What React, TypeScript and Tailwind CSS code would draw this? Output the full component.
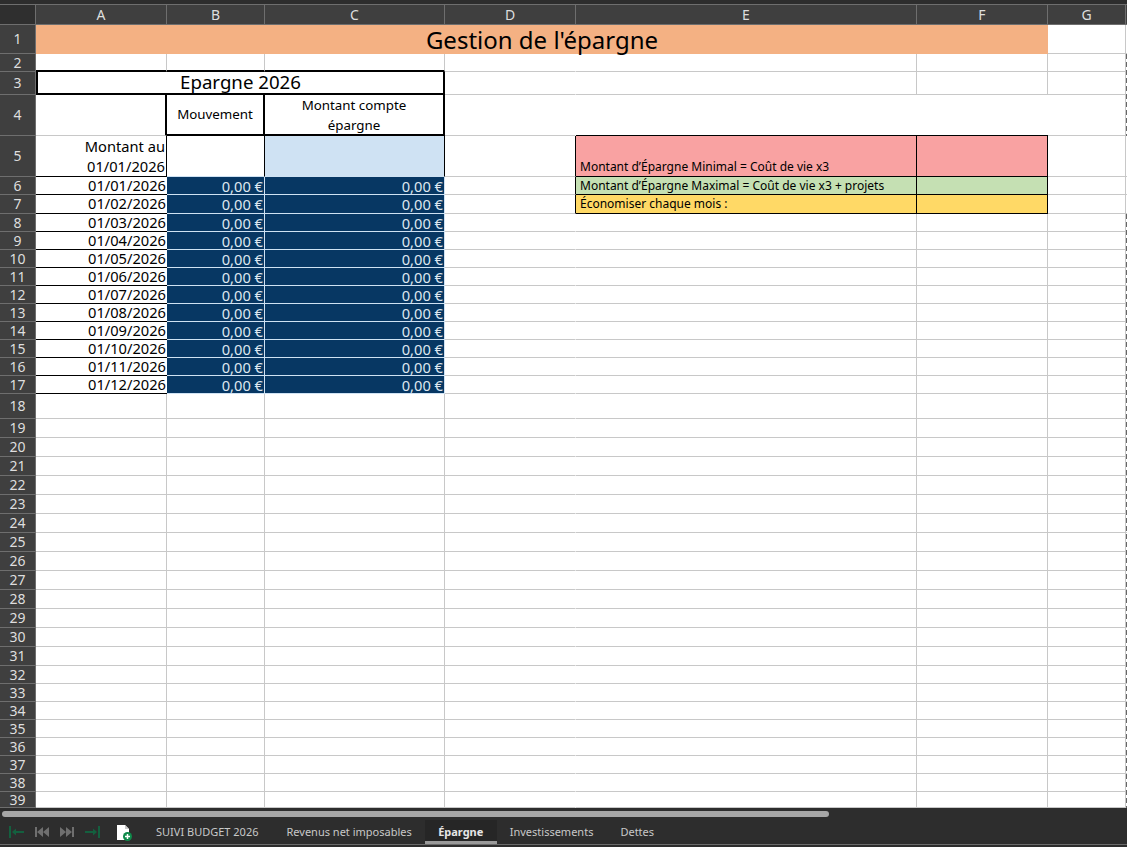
import React from 'react';

const colHeaders = ['A', 'B', 'C', 'D', 'E', 'F', 'G'];
const dates = ['01/01/2026', '01/02/2026', '01/03/2026', '01/04/2026', '01/05/2026', '01/06/2026', '01/07/2026', '01/08/2026', '01/09/2026', '01/10/2026', '01/11/2026', '01/12/2026'];
const blankRows = Array.from({ length: 22 }, (_, i) => i + 18);

const grid = 'border-r border-b border-[#c8c8c8]';

function Cell({ className = grid, children }: { className?: string; children?: React.ReactNode }) {
  return <div className={`min-w-0 overflow-hidden whitespace-nowrap ${className}`}>{children}</div>;
}

function RowHead({ n }: { n: number }) {
  return (
    <div className="flex items-center justify-center overflow-hidden border-r border-b border-[#6e6e6e] bg-[#3f3f3f] text-[14px] leading-none text-[#dedede]">
      {n}
    </div>
  );
}

function Sep() {
  return <span className="h-[14px] w-px bg-[#6a6a6a]" />;
}

function NavEnd({ flip }: { flip?: boolean }) {
  return (
    <svg width="16" height="12" viewBox="0 0 16 12" className={flip ? '-scale-x-100' : ''}>
      <path d="M1 0v12" stroke="#14603f" strokeWidth="2" />
      <path d="M15 6H5" stroke="#14603f" strokeWidth="2" />
      <path d="M3 6l4-3.5v7z" fill="#14603f" />
    </svg>
  );
}

function NavSkip({ flip }: { flip?: boolean }) {
  return (
    <svg width="14" height="10" viewBox="0 0 14 10" className={flip ? '-scale-x-100' : ''}>
      <path d="M0 0h2v10H0zM2 5l6-5v10zM8 5l6-5v10z" fill="#6f6f6f" />
    </svg>
  );
}

export default function App() {
  return (
    <div className="flex h-[847px] w-[1127px] flex-col overflow-hidden bg-[#2d2d2d] font-['Noto_Sans',sans-serif] text-black">
      <div className="h-1 shrink-0 bg-[#2d2d2d]" />
      <div className="relative grid h-[804px] shrink-0 grid-cols-[36px_131px_98px_180px_131px_341px_131px_78px_1fr] grid-rows-[21px_29px_18px_23px_41px_41px_18px_19px_repeat(10,18px)_25px_repeat(13,19px)_repeat(7,18px)_16px] overflow-hidden bg-white">
        {/* column headers */}
        <div className="border-t border-r border-b border-[#6e6e6e] bg-[#2f2f2f]" />
        {colHeaders.map((c) => (
          <div key={c} className="flex items-center justify-center border-t border-r border-b border-[#6e6e6e] bg-[#3f3f3f] text-[14px] leading-none text-[#dedede]">
            {c}
          </div>
        ))}
        <div className="border-t border-b border-[#6e6e6e] bg-[#3f3f3f]" />

        {/* row 1 */}
        <RowHead n={1} />
        <div className="col-span-6 flex items-center justify-center bg-[#f4b183] text-[24px] leading-none">Gestion de l'épargne</div>
        <Cell />
        <Cell className="border-b border-[#c8c8c8]" />

        {/* row 2 */}
        <RowHead n={2} />
        <Cell className="border-r border-b-2 border-r-[#c8c8c8] border-b-black" />
        <Cell className="border-r border-b-2 border-r-[#c8c8c8] border-b-black" />
        <Cell className="border-r border-b-2 border-r-[#c8c8c8] border-b-black" />
        <Cell className="border-b border-r border-b-[#c8c8c8] border-r-transparent" />
        <Cell />
        <Cell />
        <Cell />
        <Cell className="border-b border-[#c8c8c8]" />

        {/* row 3 */}
        <RowHead n={3} />
        <div className="col-span-3 flex items-center justify-center border-r-2 border-b-2 border-l-2 border-black text-[18.67px] leading-none">Epargne 2026</div>
        <Cell className="border-b border-r border-b-[#c8c8c8] border-r-transparent" />
        <Cell />
        <Cell />
        <Cell />
        <Cell className="border-b border-[#c8c8c8]" />

        {/* row 4 */}
        <RowHead n={4} />
        <Cell className="border-r-2 border-b border-r-black border-b-[#c8c8c8]" />
        <div className="flex items-center justify-center border-r-2 border-b-2 border-black text-[13.33px]">Mouvement</div>
        <div className="flex items-center justify-center border-r-2 border-b-2 border-black text-center text-[13.33px] leading-[20px]">
          Montant compte
          <br />
          épargne
        </div>
        <Cell className="border-b border-r border-b-[#c8c8c8] border-r-transparent" />
        <Cell className="border-b border-b-black" />
        <Cell className="border-b border-b-black" />
        <Cell />
        <Cell className="border-b border-[#c8c8c8]" />

        {/* row 5 */}
        <RowHead n={5} />
        <div className="border-r border-b border-black pr-px text-right text-[14.67px] leading-[20px]">
          Montant au
          <br />
          01/01/2026
        </div>
        <Cell className="border-r border-b border-r-black border-b-[#cfe2f3]" />
        <Cell className="border-r border-b border-r-black border-b-[#cfe2f3] bg-[#cfe2f3]" />
        <Cell className="border-r border-b border-r-black border-b-[#c8c8c8]" />
        <div className="flex items-end border-r border-b border-black bg-[#f9a2a2] pl-1 text-[12px] leading-[18px]">Montant d’Épargne Minimal = Coût de vie x3</div>
        <Cell className="border-r border-b border-black bg-[#f9a2a2]" />
        <Cell />
        <Cell className="border-b border-[#c8c8c8]" />

        {/* rows 6 to 17 */}
        {dates.map((d, i) => (
          <React.Fragment key={d}>
            <RowHead n={i + 6} />
            <div className="overflow-hidden border-b border-black pr-px text-right text-[14.67px] leading-[17px]">{d}</div>
            <div className="overflow-hidden border-r border-b border-[#cfe2f3] bg-[#073763] pt-px pr-px text-right text-[14.67px] leading-[17px] text-[#dfe8f0]">0,00 €</div>
            <div className="overflow-hidden border-r border-b border-[#cfe2f3] bg-[#073763] pt-px pr-px text-right text-[14.67px] leading-[17px] text-[#dfe8f0]">0,00 €</div>
            {i === 0 && <Cell className="border-r border-b border-r-black border-b-[#c8c8c8]" />}
            {i === 0 && <div className="overflow-hidden whitespace-nowrap border-r border-b border-black bg-[#c5e0b3] pl-1 text-[12px] leading-[17px]">Montant d’Épargne Maximal = Coût de vie x3 + projets</div>}
            {i === 0 && <Cell className="border-r border-b border-black bg-[#c5e0b3]" />}
            {i === 1 && <Cell className="border-r border-b border-r-black border-b-[#c8c8c8]" />}
            {i === 1 && <div className="overflow-hidden whitespace-nowrap border-r border-b border-black bg-[#ffd966] pl-1 text-[12px] leading-[18px]">Économiser chaque mois :</div>}
            {i === 1 && <Cell className="border-r border-b border-black bg-[#ffd966]" />}
            {i > 1 && <Cell className="border-b border-r border-b-[#c8c8c8] border-r-transparent" />}
            {i > 1 && <Cell />}
            {i > 1 && <Cell />}
            <Cell />
            <Cell className="border-b border-[#c8c8c8]" />
          </React.Fragment>
        ))}

        {/* rows 18 to 39 */}
        {blankRows.map((n) => (
          <React.Fragment key={n}>
            <RowHead n={n} />
            <Cell />
            <Cell />
            <Cell />
            <Cell className="border-b border-r border-b-[#c8c8c8] border-r-transparent" />
            <Cell />
            <Cell />
            <Cell />
            <Cell className="border-b border-[#c8c8c8]" />
          </React.Fragment>
        ))}

        {/* dashed page break after column D */}
        <div className="absolute top-0 right-0 bottom-0 col-start-5 row-start-3 row-end-6 w-px bg-[repeating-linear-gradient(to_bottom,#666666_0,#666666_5px,transparent_5px,transparent_8px)]" />
        <div className="absolute top-0 right-0 bottom-0 col-start-5 row-start-9 row-end-41 w-px bg-[repeating-linear-gradient(to_bottom,#666666_0,#666666_5px,transparent_5px,transparent_8px)]" />
      </div>

      {/* horizontal scrollbar */}
      <div className="flex h-[12px] shrink-0 items-start pt-[3px] pl-[2px]">
        <div className="h-[6px] w-[827px] rounded-[3px] bg-[#a6a6a6]" />
      </div>

      {/* sheet tabs */}
      <div className="flex h-[25px] shrink-0 items-center border-b border-[#6a6a6a] text-[11px] text-[#c8c8c8]">
        <div className="ml-[9px] flex items-center">
          <NavEnd />
          <span className="ml-[10px]"><NavSkip /></span>
          <span className="ml-[11px]"><NavSkip flip /></span>
          <span className="ml-[10px]"><NavEnd flip /></span>
        </div>
        <svg width="16" height="17" viewBox="0 0 16 17" className="ml-[16px]">
          <path d="M1 1h8l4 4v11H1z" fill="#ffffff" />
          <path d="M9 1v4h4" fill="#c8c8c8" />
          <circle cx="11.5" cy="12.5" r="4.5" fill="#0f8a4a" />
          <path d="M11.5 10v5M9 12.5h5" stroke="#ffffff" strokeWidth="1.5" />
        </svg>
        <span className="ml-[24px] whitespace-nowrap">SUIVI BUDGET 2026</span>
        <span className="ml-[13px]"><Sep /></span>
        <span className="ml-[15px] whitespace-nowrap">Revenus net imposables</span>
        <span className="ml-[13px]"><Sep /></span>
        <div className="flex h-full w-[72px] items-center justify-center border-b-[3px] border-[#9a9a9a] bg-[#262626] pt-[3px] font-bold whitespace-nowrap text-[#e6e6e6]">Épargne</div>
        <span className="ml-[13px] whitespace-nowrap">Investissements</span>
        <span className="ml-[13px]"><Sep /></span>
        <span className="ml-[14px] whitespace-nowrap">Dettes</span>
        <span className="ml-[12px]"><Sep /></span>
      </div>
    </div>
  );
}
